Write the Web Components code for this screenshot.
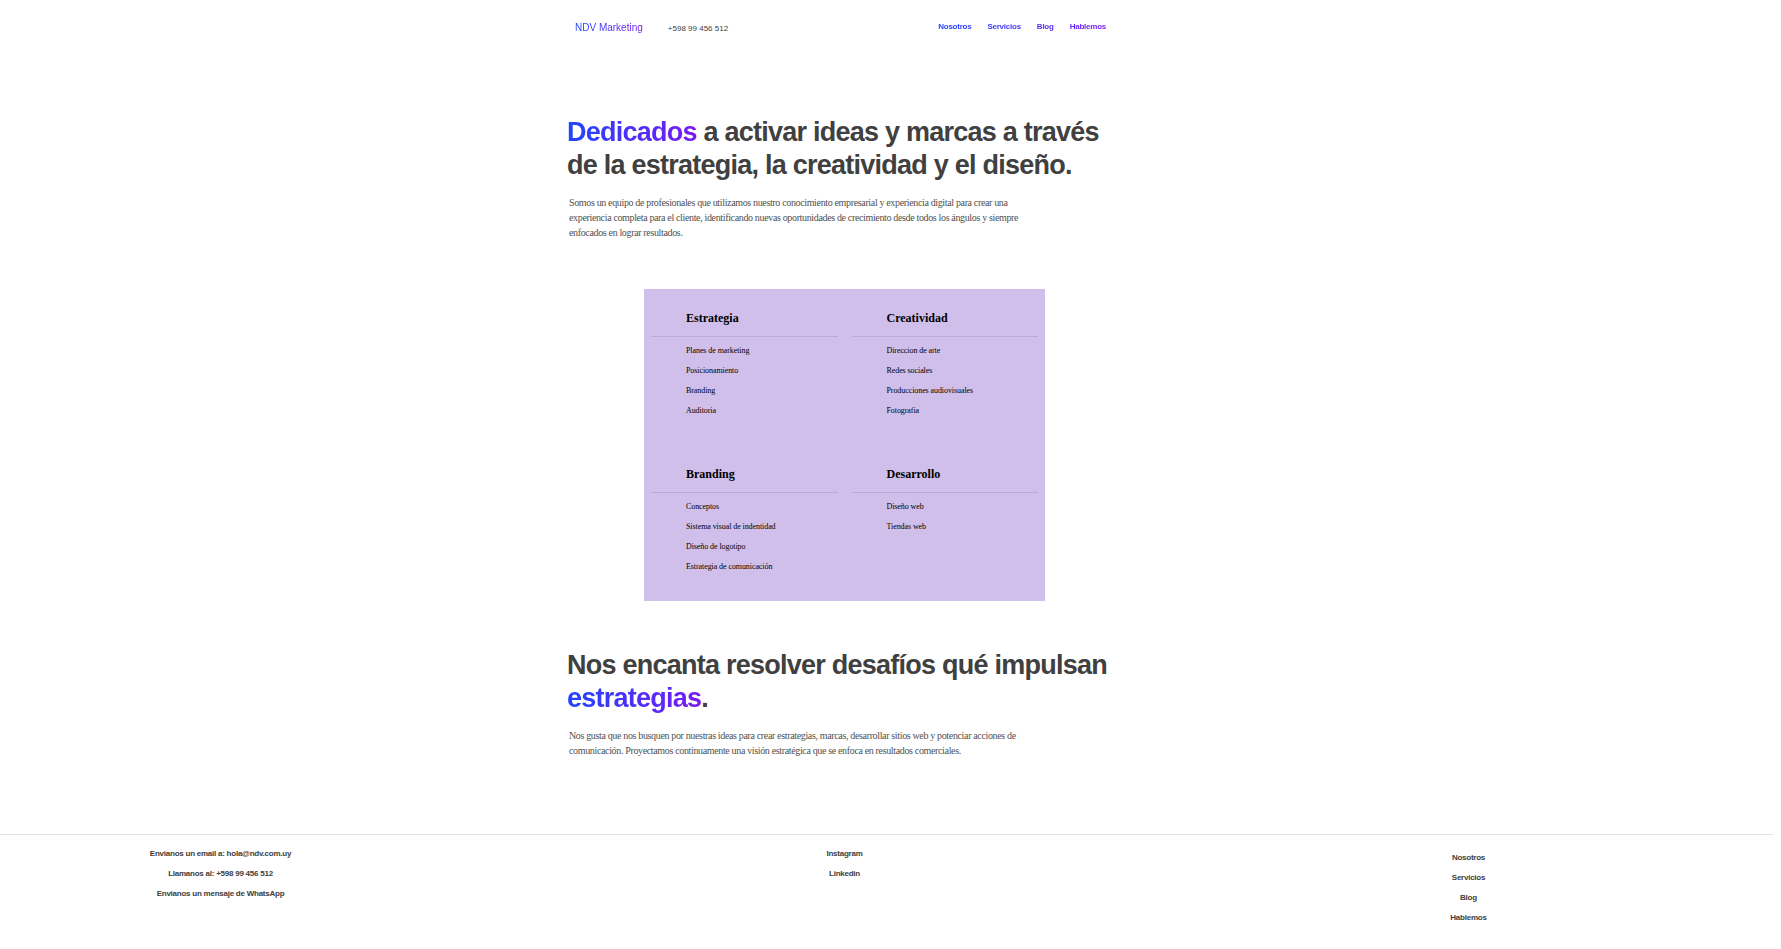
<!DOCTYPE html>
<html lang="es">
<head>
<meta charset="utf-8">
<meta name="viewport" content="width=device-width, initial-scale=1">
<title>NDV Marketing</title>
<style>
body {
  margin: 0 8px 0 0;
  background: #fff;
  color: #404040;
  font-family: "Liberation Sans", Arial, sans-serif;
  --brand: linear-gradient(to right, #1f45fc, #7a1af5);
  --gutter: 84px;
  --serif: "Liberation Serif", "Times New Roman", serif;
}
</style>
</head>
<body>
<ndv-page>
  <ndv-header slot="header" brand="NDV Marketing" phone="+598 99 456 512"></ndv-header>
  <ndv-section>
    <span slot="title"><ndv-mark>Dedicados</ndv-mark> a activar ideas y marcas a través <span>de la estrategia, la creatividad y el diseño.</span></span>
    Somos un equipo de profesionales que utilizamos nuestro conocimiento empresarial y experiencia digital para crear una experiencia completa para el cliente, identificando nuevas oportunidades de crecimiento desde todos los ángulos y siempre enfocados en lograr resultados.
  </ndv-section>
  <ndv-services>
    <ndv-card heading="Estrategia" items="Planes de marketing|Posicionamiento|Branding|Auditoria"></ndv-card>
    <ndv-card heading="Creatividad" items="Direccion de arte|Redes sociales|Producciones audiovisuales|Fotografia"></ndv-card>
    <ndv-card heading="Branding" items="Conceptos|Sistema visual de indentidad|Diseño de logotipo|Estrategia de comunicación"></ndv-card>
    <ndv-card heading="Desarrollo" items="Diseño web|Tiendas web"></ndv-card>
  </ndv-services>
  <ndv-section>
    <span slot="title">Nos encanta resolver desafíos qué impulsan <ndv-mark>estrategias</ndv-mark>.</span>
    Nos gusta que nos busquen por nuestras ideas para crear estrategias, marcas, desarrollar sitios web y potenciar acciones de comunicación. Proyectamos continuamente una visión estratégica que se enfoca en resultados comerciales.
  </ndv-section>
  <ndv-footer slot="footer">
    <ndv-links items="Envianos un email a: hola@ndv.com.uy|Llamanos al: +598 99 456 512|Envianos un mensaje de WhatsApp"></ndv-links>
    <ndv-links items="Instagram|Linkedin"></ndv-links>
    <ndv-links class="site" items="Nosotros|Servicios|Blog|Hablemos"></ndv-links>
  </ndv-footer>
</ndv-page>
<script>
class NdvElement extends HTMLElement {
  connectedCallback() {
    if (this.shadowRoot) return;
    this.attachShadow({ mode: "open" }).innerHTML = this.render();
  }
  get items() { return (this.getAttribute("items") || "").split("|"); }
}

customElements.define("ndv-page", class extends NdvElement {
  render() {
    return `<style>
      :host { display: block; }
      .column { display: flex; flex-direction: column; max-width: 555px; margin: 0 auto; }
      .center { padding-right: var(--gutter); }
    </style>
    <div class="center">
      <div class="column"><slot name="header"></slot><main><slot></slot></main></div>
    </div>
    <slot name="footer"></slot>`;
  }
});

customElements.define("ndv-mark", class extends NdvElement {
  render() {
    return `<style>
      :host { display: inline; background: var(--brand); -webkit-background-clip: text; background-clip: text; color: transparent; }
    </style><slot></slot>`;
  }
});

customElements.define("ndv-header", class extends NdvElement {
  render() {
    return `<style>
      :host { display: flex; align-items: flex-start; padding: 19px 16px 0 8px; height: 96px; box-sizing: border-box; }
      a { text-decoration: none; color: inherit; }
      .contact { display: flex; align-items: baseline; gap: 25px; }
      .brand, nav { background: var(--brand); -webkit-background-clip: text; background-clip: text; color: transparent; }
      .brand { font-size: 10px; line-height: 18px; }
      .phone { font-size: 8px; }
      nav { margin-left: auto; display: flex; gap: 16px; font-size: 8px; line-height: 15px; font-weight: bold; letter-spacing: -0.03em; }
    </style>
    <div class="contact">
      <a class="brand" href="#">${this.getAttribute("brand")}</a>
      <a class="phone" href="tel:+59899456512">${this.getAttribute("phone")}</a>
    </div>
    <nav>
      <a href="#nosotros">Nosotros</a><a href="#servicios">Servicios</a><a href="#blog">Blog</a><a href="#hablemos">Hablemos</a>
    </nav>`;
  }
});

customElements.define("ndv-section", class extends NdvElement {
  render() {
    return `<style>
      :host { display: block; padding-top: 20px; }
      h1 { margin: 0; font-size: 27px; line-height: 33px; letter-spacing: -0.028em; }
      p { margin: 13px 0 0; padding-left: 2px; max-width: 456px; color: #505050; font: 10px/15px var(--serif); letter-spacing: -0.035em; }
    </style>
    <h1><slot name="title"></slot></h1>
    <p><slot></slot></p>`;
  }
});

customElements.define("ndv-services", class extends NdvElement {
  render() {
    return `<style>
      :host { display: grid; grid-template-columns: 1fr 1fr; max-width: 401px; margin: 49px auto 28px; background: #d0bfeb; color: #000; }
    </style><slot></slot>`;
  }
});

customElements.define("ndv-card", class extends NdvElement {
  render() {
    return `<style>
      :host { display: block; min-height: 156px; box-sizing: border-box; padding: 20px 7px 0; font-family: var(--serif); }
      h2 { margin: 0; padding: 0 35px 9px; font-size: 12px; line-height: 18px; border-bottom: 1px solid #bba9d6; }
      ul { list-style: none; margin: 4px 0 0; padding: 0 35px; font-size: 8px; line-height: 20px; letter-spacing: -0.01em; }
    </style>
    <h2>${this.getAttribute("heading")}</h2>
    <ul>${this.items.map(t => `<li>${t}</li>`).join("")}</ul>`;
  }
});

customElements.define("ndv-footer", class extends NdvElement {
  render() {
    return `<style>
      :host { display: grid; grid-template-columns: repeat(3, 1fr); column-gap: 183px; margin-top: 76px; padding: 9px var(--gutter) 0 0; border-top: 1px solid #e3e3e3; }
      ::slotted(.site) { padding-top: 4px; }
    </style><slot></slot>`;
  }
});

customElements.define("ndv-links", class extends NdvElement {
  render() {
    return `<style>
      :host { display: block; text-align: center; }
      ul { list-style: none; margin: 0; padding: 0; font-size: 8px; font-weight: bold; line-height: 20px; letter-spacing: -0.03em; }
      a { color: inherit; text-decoration: none; }
    </style>
    <ul>${this.items.map(t => `<li><a href="#">${t}</a></li>`).join("")}</ul>`;
  }
});
</script>
</body>
</html>
